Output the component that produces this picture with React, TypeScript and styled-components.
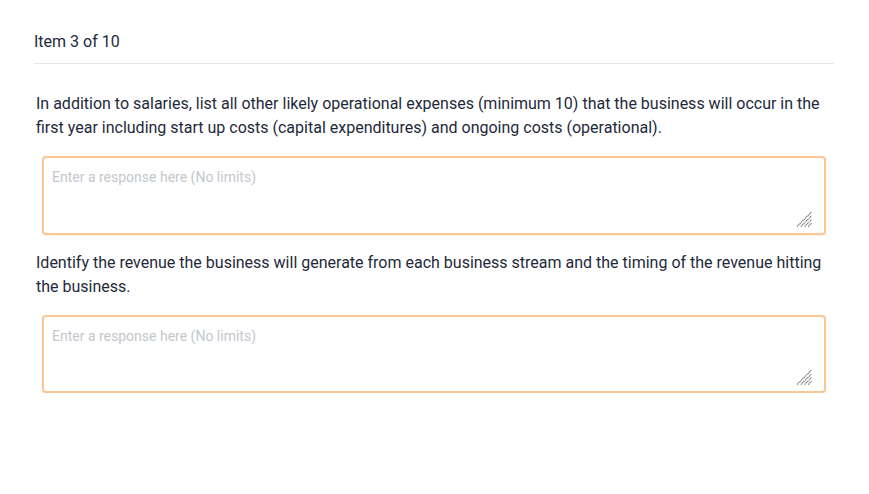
import React from "react";
import styled, { createGlobalStyle } from "styled-components";

const Global = createGlobalStyle`
  html, body { margin: 0; padding: 0; background: #ffffff; }
  body { font-family: Roboto, "Noto Sans", Arial, sans-serif; }
`;

const Page = styled.div`
  padding: 0 35px 0 34px;
  width: 800px;
`;

const Header = styled.div`
  padding: 32px 0 11px;
  font-size: 16px;
  line-height: 20px;
  color: #1e2a3b;
  border-bottom: 1px solid #e5e7eb;
`;

const Questions = styled.div`
  display: flex;
  flex-direction: column;
  padding-top: 28px;
  gap: 16px;
`;

const Question = styled.div`
  display: flex;
  flex-direction: column;
  gap: 16px;
`;

const Prompt = styled.p`
  margin: 0;
  padding: 0 8px 0 2px;
  font-size: 16px;
  line-height: 24px;
  color: #1e2a3b;
`;

const Field = styled.div`
  position: relative;
  margin: 0 8px;
  width: 784px;
`;

const Response = styled.textarea<{ $h: number }>`
  box-sizing: border-box;
  display: block;
  width: 100%;
  height: ${(p) => p.$h}px;
  padding: 9px 8px;
  border: 2px solid #fdc592;
  border-radius: 4px;
  box-shadow: 0 1px 2px rgba(0, 0, 0, 0.06);
  font-family: Roboto, "Noto Sans", Arial, sans-serif;
  font-size: 14px;
  line-height: 20px;
  color: #1e2a3b;
  outline: none;
  resize: none;
  &::placeholder { color: #c3c7ce; }
`;

const Grip = styled.svg`
  position: absolute;
  right: 14px;
  bottom: 8px;
  width: 16px;
  height: 16px;
  pointer-events: none;
`;

const ResizeGrip = () => (
  <Grip viewBox="0 0 16 16">
    <g stroke="#6b6b6b" strokeWidth="1.1" strokeDasharray="1.3 0.6">
      <line x1="1" y1="15.5" x2="15.5" y2="1" />
      <line x1="4.8" y1="15.5" x2="15.5" y2="4.8" />
      <line x1="8.6" y1="15.5" x2="15.5" y2="8.6" />
      <line x1="12.2" y1="15.5" x2="15.5" y2="12.2" />
    </g>
  </Grip>
);

const items = [
  {
    text: "In addition to salaries, list all other likely operational expenses (minimum 10) that the business will occur in the first year including start up costs (capital expenditures) and ongoing costs (operational).",
    h: 79,
  },
  {
    text: "Identify the revenue the business will generate from each business stream and the timing of the revenue hitting the business.",
    h: 78,
  },
];

export default function App() {
  return (
    <>
      <Global />
      <Page>
        <Header>Item 3 of 10</Header>
        <Questions>
          {items.map((it, i) => (
            <Question key={i}>
              <Prompt>{it.text}</Prompt>
              <Field>
                <Response $h={it.h} placeholder="Enter a response here (No limits)" />
                <ResizeGrip />
              </Field>
            </Question>
          ))}
        </Questions>
      </Page>
    </>
  );
}
